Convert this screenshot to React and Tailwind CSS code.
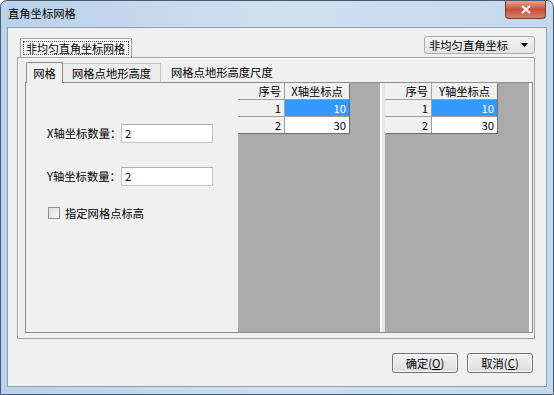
import React from 'react';

const FONT = "font-['Noto_Sans_CJK_SC','Liberation_Sans',sans-serif]";

const Grid = ({ label, w2 }) => (
    <div className="h-full bg-[#ababab]">
        <div className="inline-flex flex-col shadow-[1px_1px_0_#6e6e6e]">
            <div className="flex h-[17px]">
                <div className="w-[47px] bg-[#f0f0f0] border-r border-b border-[#a0a0a0] text-right pr-[3px] leading-[16px]">序号</div>
                <div className={`${w2} bg-[#f0f0f0] border-b border-[#a0a0a0] text-center leading-[16px]`}>{label}</div>
            </div>
            <div className="flex h-[17px]">
                <div className="w-[47px] bg-[#f0f0f0] border-r border-b border-[#a0a0a0] text-right pr-[3px] leading-[16px]">1</div>
                <div className={`${w2} bg-[#3399ff] text-white border-b border-[#a0a0a0] text-right pr-[3px] leading-[16px]`}>10</div>
            </div>
            <div className="flex h-[16px]">
                <div className="w-[47px] bg-[#f0f0f0] border-r border-[#a0a0a0] text-right pr-[3px] leading-[16px]">2</div>
                <div className={`${w2} bg-white text-right pr-[3px] leading-[16px]`}>30</div>
            </div>
        </div>
    </div>
);

const Field = ({ label, value }) => (
    <div className="flex items-center h-[19px]">
        <span className="w-[74px] leading-[19px] whitespace-nowrap">{label}</span>
        <div className="w-[92px] h-[19px] bg-white border border-[#c5c5c5] border-t-[#abadb3] pl-[3px] leading-[17px]">{value}</div>
    </div>
);

const Button = ({ text, k }) => (
    <button className="w-[66px] h-[20px] rounded-[3px] border border-[#707070] bg-gradient-to-b from-[#f2f2f2] to-[#dcdcdc] shadow-[inset_0_0_0_1px_#fbfbfb] leading-[18px] text-[11.3px]">
        {text}(<span className="underline">{k}</span>)
    </button>
);

export default function App() {
    return (
        <div className={`${FONT} w-[554px] h-[395px] bg-white text-[11.3px] text-black`}>
            <div className="w-full h-full flex flex-col rounded-t-[7px] border border-[#4a5a6a] bg-gradient-to-r from-[#b9d1ea] via-[#cfe0f2] to-[#c4d9ee] overflow-hidden">
                {/* title bar */}
                <div className="h-[26px] flex items-start justify-between">
                    <span className="ml-[7px] mt-[3px] leading-[18px]">直角坐标网格</span>
                    <div className="mr-[7px] w-[41px] h-[18px] rounded-b-[4px] border border-t-0 border-[#6d3a36] bg-gradient-to-b from-[#e8a393] via-[#c94f3e] to-[#d9806a] flex items-center justify-center">
                        <svg width="10" height="9" viewBox="0 0 10 9">
                            <path d="M1 1 L9 8 M9 1 L1 8" stroke="#ffffff" strokeWidth="2.2" />
                        </svg>
                    </div>
                </div>

                {/* client area */}
                <div className="mx-[6px] h-[360px] border border-[#8d9fb3] bg-[#f0f0f0] flex flex-col pt-[8px] pl-[9px] pr-[11px]">
                    <div className="h-[21px] flex justify-between">
                        <div className="ml-[3px] mt-[2px] h-[19px] w-[112px] border border-b-0 border-[#a0a0a0] bg-[#f8f8f8] p-[2px]">
                            <div className="h-full border border-dotted border-[#555] leading-[13px] pl-[2px] whitespace-nowrap text-[11px]">非均匀直角坐标网格</div>
                        </div>
                        <div className="h-[18px] w-[111px] border border-[#acacac] rounded-[3px] bg-gradient-to-b from-[#f3f3f3] to-[#e3e3e3] flex items-center justify-between pl-[4px] pr-[6px]">
                            <span className="leading-[16px]">非均匀直角坐标</span>
                            <svg width="7" height="4" viewBox="0 0 7 4">
                                <path d="M0 0 H7 L3.5 4 Z" fill="#000" />
                            </svg>
                        </div>
                    </div>

                    {/* outer frame */}
                    <div className="h-[282px] border border-[#a0a0a0] shadow-[inset_1px_1px_0_#ffffff] pt-[3px] pl-[7px] pr-[1px] flex flex-col">
                        {/* tabs */}
                        <div className="h-[21px] flex items-end pl-[1px]">
                            <div className="h-[21px] w-[37px] border border-b-0 border-[#8c8c8c] bg-[#f0f0f0] rounded-t-[2px] text-center leading-[20px] relative top-[1px]">网格</div>
                            <div className="h-[19px] w-[98px] border-t border-r border-[#c4c4c4] bg-[#ececec] pl-[9px] leading-[19px]">网格点地形高度</div>
                            <div className="h-[19px] w-[114px] pl-[10px] leading-[19px]">网格点地形高度尺度</div>
                        </div>
                        {/* panel */}
                        <div className="h-[251px] border border-[#8c8c8c] flex">
                            <div className="w-[212px] pl-[21px] pt-[41px] flex flex-col gap-[24px]">
                                <Field label="X轴坐标数量：" value="2" />
                                <Field label="Y轴坐标数量：" value="2" />
                                <div className="flex items-center gap-[5px] -mt-[4px] pl-[1px]">
                                    <div className="w-[12px] h-[12px] border border-[#8f8f8f] bg-gradient-to-br from-[#dcdcdc] to-[#fbfbfb]" />
                                    <span className="leading-[14px]">指定网格点标高</span>
                                </div>
                            </div>
                            <div className="w-[142px]">
                                <Grid label="X轴坐标点" w2="w-[64px]" />
                            </div>
                            <div className="w-[5px] border-l-2 border-white bg-[#e6e6e6]" />
                            <div className="w-[144px]">
                                <Grid label="Y轴坐标点" w2="w-[65px]" />
                            </div>
                            <div className="w-[3px] border-l border-white" />
                        </div>
                    </div>

                    <div className="mt-[14px] flex justify-end gap-[9px] pr-[2px]">
                        <Button text="确定" k="O" />
                        <Button text="取消" k="C" />
                    </div>
                </div>
            </div>
        </div>
    );
}
